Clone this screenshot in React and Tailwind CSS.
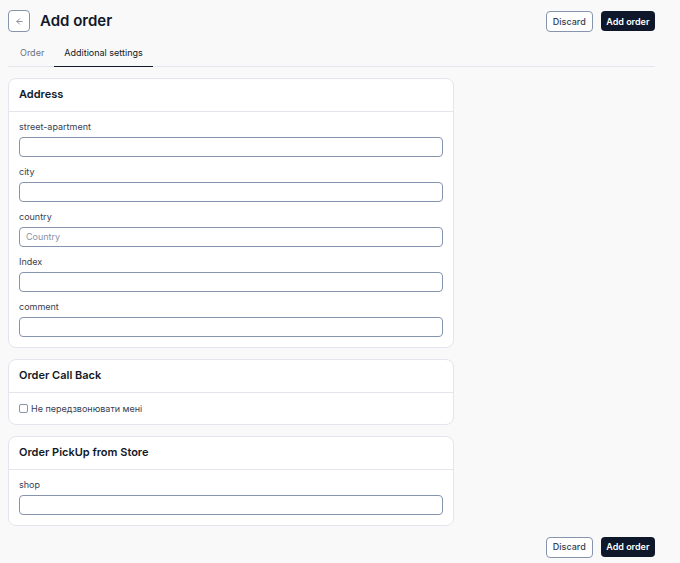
import { ArrowLeft } from "lucide-react";

const font = { fontFamily: "Inter, 'Noto Sans', sans-serif" };

function Card({ title, children, body = "pt-[9px] pb-[10px]" }) {
  return (
    <div className="bg-white border border-[#e3e6ee] rounded-lg">
      <div className="px-[10px] h-[33px] flex items-center border-b border-[#e3e6ee]">
        <h2 className="text-[11px] font-semibold text-[#111827]">{title}</h2>
      </div>
      <div className={`px-[10px] ${body}`}>{children}</div>
    </div>
  );
}

function Field({ label, placeholder }) {
  return (
    <div className="mb-[9px] last:mb-0">
      <label className="block text-[9px] text-[#374151] mb-[4px] leading-[12px]">{label}</label>
      <input
        placeholder={placeholder}
        className="block w-full h-[20px] rounded border border-[#8794ae] px-[6px] text-[9px] placeholder:text-[#8a93a3] bg-white"
      />
    </div>
  );
}

function Actions() {
  return (
    <div className="flex items-center gap-[8px]">
      <button className="h-[21px] px-[6px] rounded border border-[#8794ae] bg-white text-[9px] font-medium text-[#374151]">
        Discard
      </button>
      <button className="h-[20px] px-[5.5px] rounded bg-[#0f172a] text-[9px] font-semibold text-white">
        Add order
      </button>
    </div>
  );
}

export default function App() {
  return (
    <div className="min-h-[563px] bg-[#f9f9fa] pl-[8px] pr-[25px]" style={font}>
      {/* Header */}
      <div className="flex items-center justify-between pt-[10px]">
        <div className="flex items-center gap-[10px]">
          <button className="w-[22px] h-[22px] rounded border border-[#8794ae] bg-white flex items-center justify-center text-[#6b7280]">
            <ArrowLeft size={9} strokeWidth={2} />
          </button>
          <h1 className="text-[15px] font-semibold text-[#111827]">Add order</h1>
        </div>
        <Actions />
      </div>

      {/* Tabs */}
      <div className="mt-[9px] flex border-b border-[#e3e6ee] text-[9px] leading-[12px]">
        <div className="pl-[12px] pr-[10px] pt-[5px] pb-[7px] text-[#6b7280]">Order</div>
        <div className="px-[10px] pt-[5px] pb-[6px] text-[#111827] border-b-[1.5px] border-[#111827] -mb-px">
          Additional settings
        </div>
      </div>

      {/* Cards */}
      <div className="w-[446px] mt-[11px] flex flex-col gap-[11px]">
        <Card title="Address">
          <Field label="street-apartment" />
          <Field label="city" />
          <Field label="country" placeholder="Country" />
          <Field label="Index" />
          <Field label="comment" />
        </Card>
        <Card title="Order Call Back" body="pt-[10px] pb-[9px]">
          <label className="flex items-center gap-[3px] text-[9px] leading-[12px] text-[#374151]">
            <input type="checkbox" className="w-[9px] h-[9px] m-0 appearance-none border border-[#8794ae] rounded-[2px] bg-white" />
            Не передзвонювати мені
          </label>
        </Card>
        <Card title="Order PickUp from Store">
          <Field label="shop" />
        </Card>
      </div>

      {/* Footer */}
      <div className="flex justify-end mt-[11px] pb-[6px]">
        <Actions />
      </div>
    </div>
  );
}
